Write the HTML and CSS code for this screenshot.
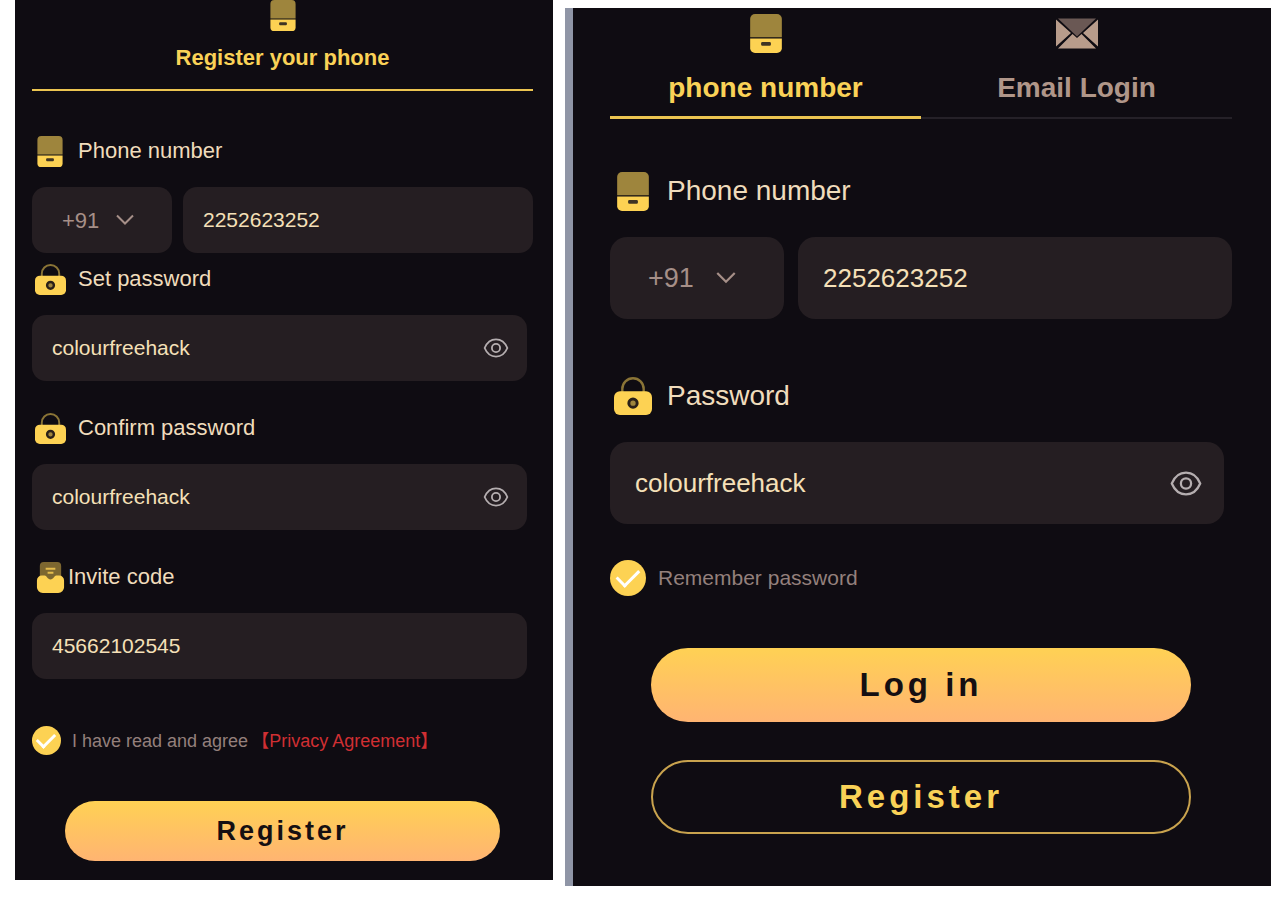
FILE: index.html
```html
<!DOCTYPE html>
<html lang="en">

<head>
    <meta charset="UTF-8">
    <meta name="viewport" content="width=device-width, initial-scale=1.0">
    <title>Register / Log in</title>
    <link rel="stylesheet" href="styles.css">
</head>

<body>
    <!-- Icons -->
    <svg class="sprite" aria-hidden="true">
        <symbol id="phone" viewBox="0 0 26 32">
            <path d="M0 19V4a4 4 0 0 1 4-4h18a4 4 0 0 1 4 4v15z" fill="#9e853d" />
            <path d="M0 20h26v8a4 4 0 0 1-4 4H4a4 4 0 0 1-4-4z" fill="#fdd253" />
            <rect x="9" y="23" width="8" height="3" rx="1" fill="#3f3423" />
        </symbol>
        <symbol id="lock" viewBox="0 0 32 32">
            <path d="M7 13V10a9 9 0 0 1 18 0v3" fill="none" stroke="#8a7436" stroke-width="2" />
            <rect y="12" width="32" height="20" rx="5" fill="#fdd253" />
            <circle cx="16" cy="22" r="3.5" fill="#9e853d" stroke="#2a2018" stroke-width="2.5" />
        </symbol>
        <symbol id="invite" viewBox="0 0 28 32">
            <rect x="3" width="22" height="24" rx="4" fill="#7d6730" />
            <path d="M9 7h10M11 11h6" stroke="#e5bd4c" stroke-width="2" />
            <path d="M5 14h3c2 0 3 4 6 4s4-4 6-4h3a5 5 0 0 1 5 5v7a6 6 0 0 1-6 6H6a6 6 0 0 1-6-6v-7a5 5 0 0 1 5-5z" fill="#fdd253" />
        </symbol>
        <symbol id="mail" viewBox="0 0 42 30">
            <path d="M2 0h38L21 18z" fill="#6a5854" />
            <path d="M0 1l15 13.500L0 28zM42 1L27 14.500 42 28zM2 30l14.500-14.500 4.500 4 4.500-4L40 30z" fill="#b89c8b" />
        </symbol>
        <symbol id="eye" viewBox="0 0 28 22">
            <path d="M1.500 11C4 5 8.500 1.500 14 1.500S24 5 26.500 11C24 17 19.500 20.500 14 20.500S4 17 1.500 11z" fill="none" stroke="#b5aeb0" stroke-width="2" />
            <circle cx="14" cy="11" r="4.500" fill="none" stroke="#b5aeb0" stroke-width="2" />
        </symbol>
        <symbol id="arrow" viewBox="0 0 18 11">
            <path d="M1 1l8 8 8-8" fill="none" stroke="#a68f88" stroke-width="2" />
        </symbol>
    </svg>

    <!-- Register -->
    <form class="panel register">
        <div class="tabs">
            <button type="button" class="tab active">
                <svg class="icon-phone"><use href="#phone" /></svg>
                Register your phone
            </button>
        </div>

        <label class="title first" for="reg-phone">
            <span class="slot"><svg class="icon-phone"><use href="#phone" /></svg></span>
            Phone number
        </label>
        <div class="phone-row">
            <div class="country">
                <select aria-label="Country code">
                    <option>+91</option>
                </select>
                <svg class="icon-arrow"><use href="#arrow" /></svg>
            </div>
            <div class="field">
                <input type="text" id="reg-phone" value="2252623252">
            </div>
        </div>

        <label class="title tight" for="reg-pass">
            <span class="slot"><svg class="icon-lock"><use href="#lock" /></svg></span>
            Set password
        </label>
        <div class="field short">
            <input type="text" id="reg-pass" value="colourfreehack">
            <button type="button" class="eye" aria-label="Show password"><svg><use href="#eye" /></svg></button>
        </div>

        <label class="title" for="reg-confirm">
            <span class="slot"><svg class="icon-lock"><use href="#lock" /></svg></span>
            Confirm password
        </label>
        <div class="field short">
            <input type="text" id="reg-confirm" value="colourfreehack">
            <button type="button" class="eye" aria-label="Show password"><svg><use href="#eye" /></svg></button>
        </div>

        <label class="title invite" for="reg-code">
            <span class="slot"><svg class="icon-invite"><use href="#invite" /></svg></span>
            Invite code
        </label>
        <div class="field short">
            <input type="text" id="reg-code" value="45662102545">
        </div>

        <div class="check">
            <input type="checkbox" id="agree" checked>
            <div class="check-text">
                <label for="agree">I have read and agree</label>
                <a href="#">【Privacy Agreement】</a>
            </div>
        </div>

        <button type="button" class="btn filled">Register</button>
    </form>

    <!-- Login -->
    <form class="panel login">
        <div class="tabs">
            <button type="button" class="tab active">
                <svg class="icon-phone"><use href="#phone" /></svg>
                phone number
            </button>
            <button type="button" class="tab">
                <svg class="icon-mail"><use href="#mail" /></svg>
                Email Login
            </button>
        </div>

        <label class="title first" for="log-phone">
            <span class="slot"><svg class="icon-phone"><use href="#phone" /></svg></span>
            Phone number
        </label>
        <div class="phone-row">
            <div class="country">
                <select aria-label="Country code">
                    <option>+91</option>
                </select>
                <svg class="icon-arrow"><use href="#arrow" /></svg>
            </div>
            <div class="field">
                <input type="text" id="log-phone" value="2252623252">
            </div>
        </div>

        <label class="title" for="log-pass">
            <span class="slot"><svg class="icon-lock"><use href="#lock" /></svg></span>
            Password
        </label>
        <div class="field short">
            <input type="text" id="log-pass" value="colourfreehack">
            <button type="button" class="eye" aria-label="Show password"><svg><use href="#eye" /></svg></button>
        </div>

        <div class="check">
            <input type="checkbox" id="remember" checked>
            <div class="check-text">
                <label for="remember">Remember password</label>
            </div>
        </div>

        <button type="button" class="btn filled">Log in</button>
        <button type="button" class="btn outline">Register</button>
    </form>
</body>

</html>
```
FILE: styles.css
```css
* {
    box-sizing: border-box;
}

body {
    display: grid;
    grid-template-columns: 538fr 706fr;
    gap: 12px;
    align-items: start;
    margin: 0;
    padding: 0 9px 0 15px;
    background-color: white;
    font-family: "Liberation Sans", "Noto Sans CJK SC", sans-serif;
}

button,
input,
select {
    font-family: inherit;
    margin: 0;
    padding: 0;
    border: none;
    background: none;
}

svg {
    display: block;
}

.sprite {
    position: absolute;
    width: 0;
    height: 0;
}

.panel {
    display: flex;
    flex-direction: column;
    min-width: 0;
    background-color: #0f0c12;
}

/* sizes of the two panels */
.register {
    --tab-size: 22px;
    --title-size: 22px;
    --title-height: 40px;
    --title-top: 27px;
    --title-gap: 16px;
    --slot: 36px;
    --slot-gap: 10px;
    --lock: 31px;
    --phone-width: 26px;
    --phone-height: 31px;
    --input-size: 21px;
    --field-height: 66px;
    --field-pad: 20px;
    --field-right: 6px;
    --eye-width: 28px;
    --eye-height: 20px;
    --eye-pad: 17px;
    --radius: 14px;
    --country: 140px;
    --country-pad: 30px;
    --country-size: 22px;
    --country-gap: 11px;
    --arrow: 18px;
    --check: 29px;
    --check-size: 18px;
    --check-gap: 11px;
    --btn-height: 60px;
    --btn-size: 27px;
    --btn-side: 33px;
    --btn-space: 3px;
    padding: 0 20px 19px 17px;
}

.login {
    --tab-size: 28px;
    --title-size: 28px;
    --title-height: 50px;
    --title-top: 52px;
    --title-gap: 21px;
    --slot: 46px;
    --slot-gap: 11px;
    --lock: 38px;
    --phone-width: 32px;
    --phone-height: 39px;
    --input-size: 26px;
    --field-height: 82px;
    --field-pad: 25px;
    --field-right: 8px;
    --eye-width: 34px;
    --eye-height: 25px;
    --eye-pad: 21px;
    --radius: 17px;
    --country: 174px;
    --country-pad: 38px;
    --country-size: 27px;
    --country-gap: 14px;
    --arrow: 22px;
    --check: 36px;
    --check-size: 21px;
    --check-gap: 12px;
    --btn-height: 74px;
    --btn-size: 33px;
    --btn-side: 41px;
    --btn-space: 4px;
    margin-top: 8px;
    padding: 6px 39px 52px 37px;
    border-left: 8px solid #8f95a6;
}

.icon-phone {
    width: var(--phone-width);
    height: var(--phone-height);
}

.icon-lock,
.icon-invite {
    width: var(--lock);
    height: var(--lock);
}

.icon-mail {
    width: 42px;
    height: 39px;
}

.icon-arrow {
    width: var(--arrow);
    height: 12px;
}

/* tabs */
.tabs {
    display: flex;
}

.tab {
    flex: 1;
    display: flex;
    flex-direction: column;
    align-items: center;
    gap: 13px;
    padding-bottom: 17px;
    border-bottom: 2px solid #252128;
    color: #b09689;
    font-size: var(--tab-size);
    line-height: 28px;
    font-weight: bold;
}

.login .tab {
    gap: 19px;
    padding-bottom: 13px;
    line-height: 32px;
}

.tab.active {
    border-bottom-color: #ecc551;
    color: #fad257;
}

.login .tab.active {
    padding-bottom: 12px;
    border-bottom-width: 3px;
}

/* labels */
.title {
    display: flex;
    align-items: center;
    gap: var(--slot-gap);
    height: var(--title-height);
    margin-top: var(--title-top);
    margin-bottom: var(--title-gap);
    color: #f0dcbc;
    font-size: var(--title-size);
}

.title.first {
    margin-top: 40px;
}

.login .title.first {
    margin-top: 47px;
}

.title.tight {
    margin-top: 6px;
}

.title.invite {
    gap: 0;
}

.slot {
    display: flex;
    justify-content: center;
    width: var(--slot);
}

/* inputs */
.phone-row {
    display: flex;
    gap: var(--country-gap);
}

.country,
.field {
    display: flex;
    align-items: center;
    height: var(--field-height);
    border-radius: var(--radius);
    background-color: #251e22;
}

.country {
    gap: 16px;
    width: var(--country);
    padding-left: var(--country-pad);
}

.login .country {
    gap: 21px;
}

.country select {
    appearance: none;
    color: #a68f88;
    font-size: var(--country-size);
}

.phone-row .field {
    flex: 1;
}

.field {
    padding: 0 var(--eye-pad) 0 var(--field-pad);
}

.field.short {
    margin-right: var(--field-right);
}

.field input {
    flex: 1;
    min-width: 0;
    color: #f5e0b8;
    font-size: var(--input-size);
}

.eye svg {
    width: var(--eye-width);
    height: var(--eye-height);
}

#eye {
    overflow: visible;
}

/* checkbox */
.check {
    display: flex;
    align-items: center;
    gap: var(--check-gap);
    margin-top: 47px;
    color: #94807c;
    font-size: var(--check-size);
    line-height: 24px;
}

.login .check {
    margin-top: 36px;
}

.check-text {
    display: flex;
    gap: 3px;
}

.check input {
    appearance: none;
    display: flex;
    align-items: center;
    justify-content: center;
    width: var(--check);
    height: var(--check);
    border-radius: 50%;
    background-color: #fdd253;
}

.check input:checked::after {
    content: "";
    width: 52%;
    height: 28%;
    margin-bottom: 12%;
    border-left: 3px solid white;
    border-bottom: 3px solid white;
    transform: rotate(-45deg);
}

.check a {
    color: #d02f33;
    text-decoration: none;
}

/* buttons */
.btn {
    height: var(--btn-height);
    margin: 38px var(--btn-side) 0;
    border-radius: 40px;
    font-size: var(--btn-size);
    font-weight: bold;
    letter-spacing: var(--btn-space);
}

.filled {
    margin-top: 46px;
    background: linear-gradient(#ffd154, #ffb472);
    color: #150f12;
}

.login .filled {
    margin-top: 52px;
}

.outline {
    border: 2px solid #c9a34e;
    color: #fad257;
}
```
